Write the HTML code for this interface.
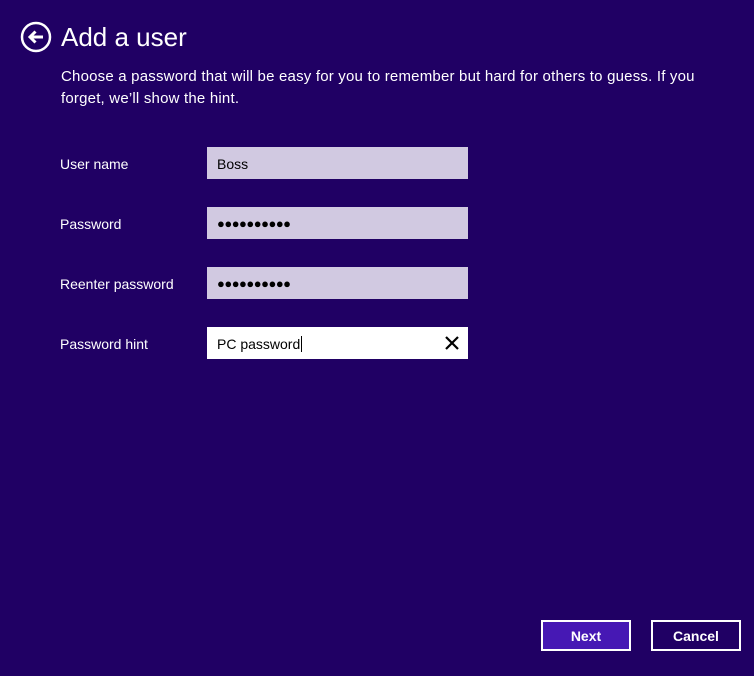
<!DOCTYPE html>
<html><head><style>
*{margin:0;padding:0;box-sizing:border-box}
body{width:754px;height:676px;background:#200064;font-family:"Liberation Sans",sans-serif;color:#fff;position:relative;overflow:hidden}
.a{position:absolute}
.lbl{position:absolute;left:60px;font-size:14px;line-height:18px}
.f{position:absolute;left:207px;width:261px;height:32px;background:#d1c9e1;color:#000;font-size:14px;line-height:34px;padding-left:10px}
.dots{font-size:13px;letter-spacing:-0.5px;line-height:33px}
.btn{position:absolute;top:620px;width:90px;height:31px;border:2px solid #fff;font-size:14px;font-weight:bold;text-align:center;line-height:29px}
</style></head><body>
<svg class="a" style="left:20px;top:21px" width="32" height="32" viewBox="0 0 32 32"><circle cx="16" cy="16" r="14" fill="none" stroke="#fff" stroke-width="2.5"/><path d="M23 16H10M15.5 10.5L10 16l5.5 5.5" fill="none" stroke="#fff" stroke-width="3"/></svg>
<div class="a" style="left:61px;top:21px;font-size:26px;line-height:32px">Add a user</div>
<div class="a" style="left:61px;top:66px;font-size:15px;letter-spacing:0.2px;line-height:22px;width:660px">Choose a password that will be easy for you to remember but hard for others to guess. If you forget, we’ll show the hint.</div>
<div class="lbl" style="top:155px">User name</div>
<div class="lbl" style="top:215px">Password</div>
<div class="lbl" style="top:275px">Reenter password</div>
<div class="lbl" style="top:335px">Password hint</div>
<div class="f" style="top:147px">Boss</div>
<div class="f dots" style="top:207px">●●●●●●●●●●</div>
<div class="f dots" style="top:267px">●●●●●●●●●●</div>
<div class="f" style="top:327px;background:#fff">PC password<span style="border-left:1px solid #000;margin-left:1px"></span>
<svg class="a" style="left:238px;top:9px" width="14" height="14" viewBox="0 0 14 14"><path d="M1 1L13 13M13 1L1 13" stroke="#000" stroke-width="2.2"/></svg></div>
<div class="btn" style="left:541px;background:#4618b4">Next</div>
<div class="btn" style="left:651px">Cancel</div>
</body></html>
